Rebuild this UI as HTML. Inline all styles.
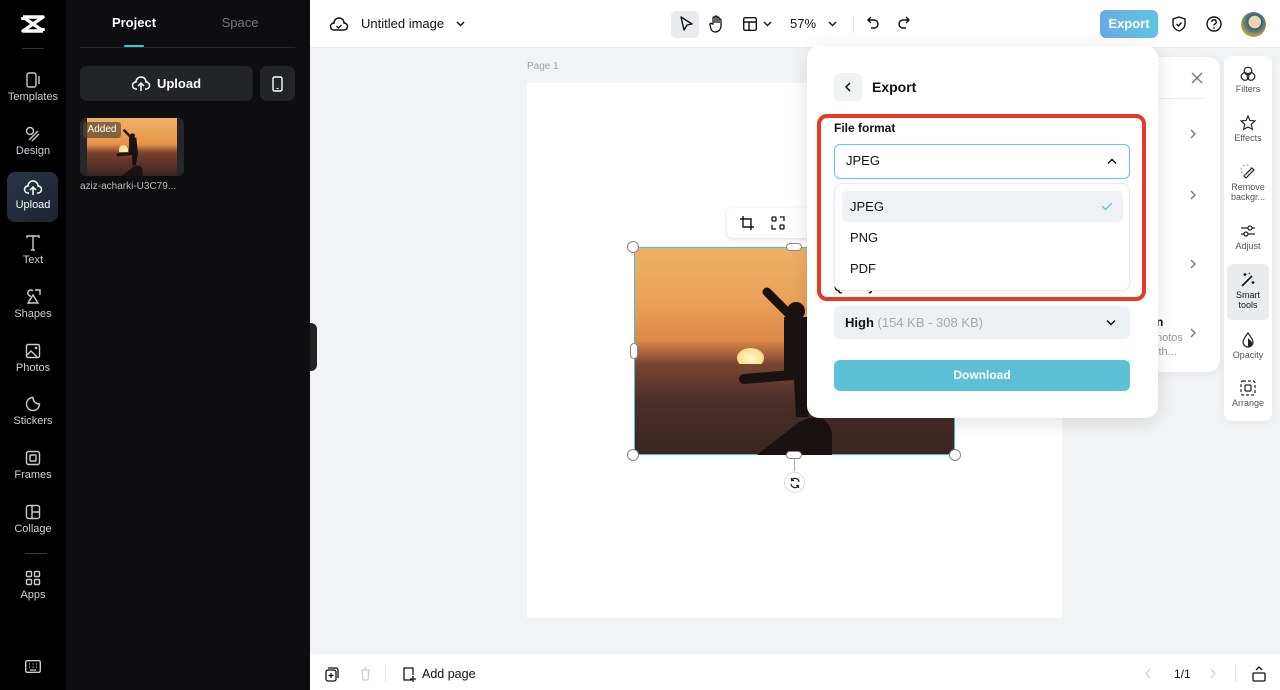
<!DOCTYPE html>
<html><head><meta charset="utf-8"><style>
*{box-sizing:border-box;margin:0;padding:0}
body{width:1280px;height:690px;overflow:hidden;position:relative;font-family:"Liberation Sans",sans-serif;background:#f2f3f5;color:#111}
.abs{position:absolute}
.rail{left:0;top:0;width:66px;height:690px;background:#000}
.ri{position:absolute;left:0;width:66px;text-align:center;color:#cfd0d3;font-size:11px}
.ri svg{display:block;margin:0 auto 3px}
.panel{left:66px;top:0;width:244px;height:690px;background:#0e0e10}
.top{left:310px;top:0;width:970px;height:48px;background:#fff;border-bottom:1px solid #eceef1}
.bot{left:310px;top:654px;width:970px;height:36px;background:#fff}
svg{overflow:visible}
</style></head><body>
<div class="abs rail">
 <svg class="abs" style="left:20px;top:14px" width="26" height="20" viewBox="0 0 26 20"><path d="M3 3h20L3 17h20M3 3l20 14M3 3v3M23 17v-3" stroke="#fff" stroke-width="3.5" fill="none" stroke-linejoin="round"/></svg>
 <div class="abs" style="left:22px;top:48px;width:22px;height:1px;background:#333"></div>
 <div class="ri" style="top:72px"><svg width="16" height="16" viewBox="0 0 16 16"><rect x="2" y="1" width="9" height="14" rx="2" fill="none" stroke="#ccc" stroke-width="1.4"/><path d="M14 4v8" stroke="#ccc" stroke-width="1.4"/></svg>Templates</div>
 <div class="ri" style="top:126px"><svg width="16" height="16" viewBox="0 0 16 16"><circle cx="5" cy="5" r="3.5" fill="none" stroke="#ccc" stroke-width="1.4"/><path d="M4 14l9-9M7 15l7-7" stroke="#ccc" stroke-width="1.4"/></svg>Design</div>
 <div class="abs" style="left:7px;top:172px;width:51px;height:50px;border-radius:8px;background:linear-gradient(135deg,#2a3648,#1c2230)"></div>
 <div class="ri" style="top:180px;color:#fff"><svg width="18" height="16" viewBox="0 0 18 16"><path d="M5 13H4a3.5 3.5 0 0 1 0-7 5 5 0 0 1 10 0 3.5 3.5 0 0 1 0 7h-1M9 15V8M6 10l3-3 3 3" fill="none" stroke="#fff" stroke-width="1.5"/></svg>Upload</div>
 <div class="ri" style="top:235px"><svg width="16" height="16" viewBox="0 0 16 16"><path d="M2 3V1h12v2M8 1v14M6 15h4" fill="none" stroke="#ccc" stroke-width="1.4"/></svg>Text</div>
 <div class="ri" style="top:289px"><svg width="16" height="16" viewBox="0 0 16 16"><path d="M6 7a3 3 0 1 1 2-5M8 6l5 8H3z M10 1h5v5" fill="none" stroke="#ccc" stroke-width="1.4"/></svg>Shapes</div>
 <div class="ri" style="top:343px"><svg width="16" height="16" viewBox="0 0 16 16"><rect x="1.5" y="1.5" width="13" height="13" rx="1.5" fill="none" stroke="#ccc" stroke-width="1.4"/><path d="M2 12l4-4 6 6" fill="none" stroke="#ccc" stroke-width="1.4"/><circle cx="11" cy="5" r="1.3" fill="#ccc"/></svg>Photos</div>
 <div class="ri" style="top:396px"><svg width="16" height="16" viewBox="0 0 16 16"><path d="M14.5 8A6.5 6.5 0 1 1 8 1.5c0 3 2 6.5 6.5 6.5z" fill="none" stroke="#ccc" stroke-width="1.4"/></svg>Stickers</div>
 <div class="ri" style="top:450px"><svg width="16" height="16" viewBox="0 0 16 16"><rect x="1.5" y="1.5" width="13" height="13" rx="2" fill="none" stroke="#ccc" stroke-width="1.4"/><rect x="5" y="5" width="6" height="6" rx="1" fill="none" stroke="#ccc" stroke-width="1.4"/></svg>Frames</div>
 <div class="ri" style="top:504px"><svg width="16" height="16" viewBox="0 0 16 16"><rect x="1.5" y="1.5" width="13" height="13" rx="2" fill="none" stroke="#ccc" stroke-width="1.4"/><path d="M7 2v12M7 8h7" stroke="#ccc" stroke-width="1.4"/></svg>Collage</div>
 <div class="abs" style="left:25px;top:553px;width:22px;height:1px;background:#333"></div>
 <div class="ri" style="top:570px"><svg width="16" height="16" viewBox="0 0 16 16"><g fill="none" stroke="#ccc" stroke-width="1.4"><rect x="1.5" y="1.5" width="5" height="5" rx="1"/><rect x="9.5" y="1.5" width="5" height="5" rx="1"/><rect x="1.5" y="9.5" width="5" height="5" rx="1"/><rect x="9.5" y="9.5" width="5" height="5" rx="1"/></g></svg>Apps</div>
 <svg class="abs" style="left:25px;top:660px" width="16" height="13" viewBox="0 0 16 13"><rect x="0.7" y="0.7" width="14.6" height="11.6" rx="1.5" fill="none" stroke="#ccc" stroke-width="1.4"/><path d="M4 4h1M7.5 4h1M11 4h1M4 7h1M7.5 7h1M11 7h1M5 10h6" stroke="#ccc" stroke-width="1.2"/></svg>
</div>
<div class="abs panel">
 <div class="abs" style="left:14px;top:15px;width:108px;text-align:center;color:#fff;font-weight:bold;font-size:13px">Project</div>
 <div class="abs" style="left:124px;top:15px;width:100px;text-align:center;color:#777;font-size:13px">Space</div>
 <div class="abs" style="left:58px;top:45px;width:20px;height:2px;background:#3ec3da;border-radius:1px"></div>
 <div class="abs" style="left:14px;top:47px;width:215px;height:1px;background:#26272b"></div>
 <div class="abs" style="left:14px;top:66px;width:173px;height:35px;border-radius:7px;background:#232428;color:#fff;font-size:13px;font-weight:bold;display:flex;align-items:center;justify-content:center;gap:7px"><svg width="18" height="16" viewBox="0 0 18 16"><path d="M5 13H4a3.5 3.5 0 0 1 0-7 5 5 0 0 1 10 0 3.5 3.5 0 0 1 0 7h-1M9 15V8M6 10l3-3 3 3" fill="none" stroke="#fff" stroke-width="1.5"/></svg>Upload</div>
 <div class="abs" style="left:194px;top:66px;width:35px;height:35px;border-radius:7px;background:#232428"><svg class="abs" style="left:12px;top:10px" width="11" height="16" viewBox="0 0 11 16"><rect x="1" y="1" width="9" height="14" rx="1.5" fill="none" stroke="#fff" stroke-width="1.4"/><path d="M4.5 12.5h2" stroke="#fff" stroke-width="1.2"/></svg></div>
 <div class="abs" style="left:14px;top:118px;width:104px;height:58px;border-radius:6px;background:#26272b;overflow:hidden">
  <div class="abs" style="left:7px;top:0;width:90px;height:58px;background:linear-gradient(#eeb366 0%,#e7934a 45%,#7a4030 60%,#3a2520 100%)"></div>
  <div class="abs" style="left:39px;top:27px;width:9px;height:7px;border-radius:5px 5px 0 0;background:#fde49a"></div>
  <svg class="abs" style="left:7px;top:0" width="90" height="58" viewBox="0 0 321 208"><path d="M133 45L160 72" stroke="#1a1210" stroke-width="9" stroke-linecap="round"/><circle cx="162" cy="64" r="9" fill="#1a1210"/><path d="M150 70h26l6 60-8 40h-12l-2-38-10-8z" fill="#1a1210"/><path d="M158 128l-48 4" stroke="#1a1210" stroke-width="10" stroke-linecap="round"/><path d="M123 208L165 175Q192 162 198 186L198 208z" fill="#1a1210"/></svg>
  <div class="abs" style="left:3px;top:4px;width:38px;height:16px;border-radius:3px;background:rgba(90,70,50,.7);color:#fff;font-size:10px;line-height:16px;text-align:center">Added</div>
 </div>
 <div class="abs" style="left:14px;top:181px;color:#bbb;font-size:10px">aziz-acharki-U3C79...</div>
</div>
<div class="abs" style="left:310px;top:323px;width:7px;height:48px;background:#222;border-radius:0 6px 6px 0"></div>
<div class="abs top">
 <svg class="abs" style="left:20px;top:16px" width="18" height="16" viewBox="0 0 18 16"><path d="M4 14a3.5 3.5 0 0 1 0-7 5 5 0 0 1 10 0 3.5 3.5 0 0 1 0 7z" fill="none" stroke="#111" stroke-width="1.5"/><path d="M6.5 10l2 2 3-3" fill="none" stroke="#111" stroke-width="1.3"/></svg>
 <div class="abs" style="left:51px;top:16px;font-size:13px;color:#111">Untitled image</div>
 <svg class="abs" style="left:146px;top:21px" width="9" height="6"><path d="M1 1l3.5 3.5L8 1" fill="none" stroke="#111" stroke-width="1.4"/></svg>
 <div class="abs" style="left:361px;top:11px;width:28px;height:27px;border-radius:5px;background:#e8eaed"></div>
 <svg class="abs" style="left:369px;top:16px" width="14" height="16" viewBox="0 0 14 16"><path d="M2 1l11 7-5 1-3 5z" fill="none" stroke="#111" stroke-width="1.4" stroke-linejoin="round"/></svg>
 <svg class="abs" style="left:399px;top:15px" width="16" height="18" viewBox="0 0 16 18"><path d="M4 9V3a1 1 0 0 1 2 0v5V2a1 1 0 0 1 2 0v6V3a1 1 0 0 1 2 0v5V5a1 1 0 0 1 2 0v6a6 6 0 0 1-6 6 5 5 0 0 1-4-3L1 10a1 1 0 0 1 2-1z" fill="none" stroke="#111" stroke-width="1.3"/></svg>
 <svg class="abs" style="left:433px;top:17px" width="14" height="14"><rect x=".7" y=".7" width="12.6" height="12.6" rx="1.5" fill="none" stroke="#111" stroke-width="1.4"/><path d="M1 5h12M6 5v8" stroke="#111" stroke-width="1.4"/></svg>
 <svg class="abs" style="left:453px;top:21px" width="9" height="6"><path d="M1 1l3.5 3.5L8 1" fill="none" stroke="#111" stroke-width="1.4"/></svg>
 <div class="abs" style="left:480px;top:16px;font-size:13px">57%</div>
 <svg class="abs" style="left:518px;top:21px" width="9" height="6"><path d="M1 1l3.5 3.5L8 1" fill="none" stroke="#111" stroke-width="1.4"/></svg>
 <div class="abs" style="left:543px;top:16px;width:1px;height:17px;background:#e3e5e8"></div>
 <svg class="abs" style="left:556px;top:16px" width="14" height="16" viewBox="0 0 14 16"><path d="M5 1L2 4l3 3M2 4h6a4 4 0 0 1 0 8H5" fill="none" stroke="#111" stroke-width="1.4"/></svg>
 <svg class="abs" style="left:587px;top:16px" width="14" height="16" viewBox="0 0 14 16"><path d="M9 1l3 3-3 3M12 4H6a4 4 0 0 0 0 8h3" fill="none" stroke="#111" stroke-width="1.4"/></svg>
 <div class="abs" style="left:790px;top:10px;width:58px;height:28px;border-radius:6px;background:linear-gradient(90deg,#6aa8e8,#5cc8dc);color:#fff;font-weight:bold;font-size:13px;text-align:center;line-height:28px">Export</div>
 <svg class="abs" style="left:862px;top:16px" width="14" height="16" viewBox="0 0 14 16"><path d="M7 1l6 2v5c0 3.5-3 6-6 7-3-1-6-3.5-6-7V3z" fill="none" stroke="#111" stroke-width="1.4"/><path d="M4.5 8l2 2 3-3.5" fill="none" stroke="#111" stroke-width="1.4"/></svg>
 <svg class="abs" style="left:896px;top:16px" width="16" height="16"><circle cx="8" cy="8" r="7" fill="none" stroke="#111" stroke-width="1.4"/><path d="M5.8 6a2.2 2.2 0 1 1 3 2c-.7.3-.8.8-.8 1.5" fill="none" stroke="#111" stroke-width="1.4"/><circle cx="8" cy="12" r=".9" fill="#111"/></svg>
 <div class="abs" style="left:931px;top:12px;width:25px;height:25px;border-radius:50%;background:radial-gradient(circle at 55% 40%,#f1d2b4 0 30%,#2f5e86 32%,#d7b53a 80%)"></div>
</div>
<div class="abs" style="left:527px;top:61px;font-size:10px;color:#9ba0a8">Page 1</div>
<div class="abs" style="left:527px;top:83px;width:535px;height:535px;background:#fff"></div>
<!-- image -->
<div class="abs" style="left:634px;top:247px;width:321px;height:208px;background:linear-gradient(#eeb167 0%,#eca25a 25%,#dc8746 45%,#7b4634 56%,#4a2e29 75%,#3b2623 100%);border:1.5px solid #3ec3da"></div>
<div class="abs" style="left:737px;top:348px;width:27px;height:20px;border-radius:50%;background:radial-gradient(#fff8c8,#fbd26a);clip-path:inset(0 0 20% 0)"></div>
<svg class="abs" style="left:634px;top:247px" width="321" height="208" viewBox="0 0 321 208"><path d="M133 45L160 72" stroke="#1a1210" stroke-width="9" stroke-linecap="round"/><circle cx="162" cy="64" r="9" fill="#1a1210"/><path d="M150 70h26l6 60-8 40h-12l-2-38-10-8z" fill="#1a1210"/><path d="M158 128l-48 4" stroke="#1a1210" stroke-width="10" stroke-linecap="round"/><path d="M123 208L165 175Q192 162 198 186L198 208z" fill="#1a1210"/></svg>
<div class="abs" style="left:627px;top:241px;width:12px;height:12px;border-radius:50%;background:#fff;border:1px solid #888"></div>
<div class="abs" style="left:627px;top:449px;width:12px;height:12px;border-radius:50%;background:#fff;border:1px solid #888"></div>
<div class="abs" style="left:949px;top:449px;width:12px;height:12px;border-radius:50%;background:#fff;border:1px solid #888"></div>
<div class="abs" style="left:786px;top:243px;width:16px;height:8px;border-radius:4px;background:#fff;border:1px solid #888"></div>
<div class="abs" style="left:786px;top:451px;width:16px;height:8px;border-radius:4px;background:#fff;border:1px solid #888"></div>
<div class="abs" style="left:630px;top:343px;width:8px;height:16px;border-radius:4px;background:#fff;border:1px solid #888"></div>
<div class="abs" style="left:794px;top:459px;width:1px;height:12px;background:#aaa"></div>
<div class="abs" style="left:784px;top:472px;width:21px;height:21px;border-radius:50%;background:#fff;border:1px solid #ddd"><svg class="abs" style="left:4px;top:4px" width="12" height="12" viewBox="0 0 12 12"><path d="M10 5A4 4 0 0 0 2.5 3.5M2 7a4 4 0 0 0 7.5 1.5M2.5 1v2.5H5M9.5 11V8.5H7" fill="none" stroke="#222" stroke-width="1.2"/></svg></div>
<div class="abs" style="left:727px;top:208px;width:100px;height:30px;background:#fff;border-radius:6px;box-shadow:0 1px 4px rgba(0,0,0,.15)">
 <svg class="abs" style="left:13px;top:8px" width="14" height="14"><path d="M3 0v11h11M0 3h11v11" fill="none" stroke="#111" stroke-width="1.4"/></svg>
 <svg class="abs" style="left:44px;top:8px" width="14" height="14"><g fill="none" stroke="#111" stroke-width="1.3"><rect x="1" y="1" width="4" height="4" rx="1"/><rect x="9" y="9" width="4" height="4" rx="1"/><path d="M1 9v4h4M9 1h4v4"/></g></svg>
</div>
<!-- behind panel -->
<div class="abs" style="left:1060px;top:57px;width:160px;height:315px;background:#fff;border-radius:12px;box-shadow:0 2px 10px rgba(0,0,0,.06)">
 <svg class="abs" style="left:131px;top:15px" width="12" height="12"><path d="M1 1l10 10M11 1L1 11" stroke="#777" stroke-width="1.4"/></svg>
 <div class="abs" style="left:30px;top:41px;width:115px;height:1px;background:#eee"></div>
 <svg class="abs" style="left:130px;top:72px" width="6" height="10"><path d="M1 1l4 4-4 4" fill="none" stroke="#777" stroke-width="1.4"/></svg>
 <svg class="abs" style="left:130px;top:133px" width="6" height="10"><path d="M1 1l4 4-4 4" fill="none" stroke="#777" stroke-width="1.4"/></svg>
 <svg class="abs" style="left:130px;top:202px" width="6" height="10"><path d="M1 1l4 4-4 4" fill="none" stroke="#777" stroke-width="1.4"/></svg>
 <svg class="abs" style="left:130px;top:271px" width="6" height="10"><path d="M1 1l4 4-4 4" fill="none" stroke="#777" stroke-width="1.4"/></svg>
 <div class="abs" style="left:96px;top:258px;font-size:12px;font-weight:bold">n</div>
 <div class="abs" style="left:96px;top:274px;font-size:11px;color:#999;line-height:14px">notos<br>ith...</div>
</div>
<!-- right rail -->
<div class="abs" style="left:1224px;top:56px;width:48px;height:365px;background:#fff;border-radius:8px;box-shadow:0 2px 8px rgba(0,0,0,.06);font-size:9px;color:#555;text-align:center;line-height:10px">
 <div class="abs" style="left:3px;top:208px;width:42px;height:56px;border-radius:6px;background:#e9ebee"></div>
 <div class="abs" style="left:0;width:48px;top:10px"><svg width="16" height="16"><g fill="none" stroke="#222" stroke-width="1.2"><circle cx="8" cy="5" r="3.8"/><circle cx="5" cy="10.5" r="3.8"/><circle cx="11" cy="10.5" r="3.8"/></g></svg><br>Filters</div>
 <div class="abs" style="left:0;width:48px;top:59px"><svg width="16" height="16"><path d="M8 1l2 4.5 5 .5-3.7 3.3 1 5L8 12l-4.3 2.3 1-5L1 6l5-.5z" fill="none" stroke="#222" stroke-width="1.2"/></svg><br>Effects</div>
 <div class="abs" style="left:0;width:48px;top:108px"><svg width="16" height="16"><path d="M6 14l8-8-2-2-8 8z" fill="none" stroke="#222" stroke-width="1.2"/><circle cx="6" cy="6" r="5" fill="none" stroke="#999" stroke-width="1" stroke-dasharray="2 2"/></svg><br>Remove<br>backgr...</div>
 <div class="abs" style="left:0;width:48px;top:167px"><svg width="16" height="16"><path d="M1 5h14M1 11h14" stroke="#222" stroke-width="1.2"/><circle cx="10" cy="5" r="2" fill="#fff" stroke="#222" stroke-width="1.2"/><circle cx="6" cy="11" r="2" fill="#fff" stroke="#222" stroke-width="1.2"/></svg><br>Adjust</div>
 <div class="abs" style="left:0;width:48px;top:216px;color:#111"><svg width="16" height="16"><path d="M2 14L12 4" stroke="#111" stroke-width="1.6"/><path d="M5 1v3M3.5 2.5h3M13 9v3M11.5 10.5h3M9 1l.5 1" stroke="#111" stroke-width="1.2"/></svg><br>Smart<br>tools</div>
 <div class="abs" style="left:0;width:48px;top:276px"><svg width="16" height="16"><path d="M8 1C5 5 3 8 3 10a5 5 0 0 0 10 0c0-2-2-5-5-9z" fill="none" stroke="#222" stroke-width="1.2"/><path d="M8 6v9a4 4 0 0 0 4-5z" fill="#222"/></svg><br>Opacity</div>
 <div class="abs" style="left:0;width:48px;top:324px"><svg width="16" height="16"><rect x="1" y="1" width="14" height="14" rx="2" fill="none" stroke="#222" stroke-width="1.2" stroke-dasharray="3 2"/><rect x="5" y="5" width="6" height="6" rx="1" fill="none" stroke="#222" stroke-width="1.2"/></svg><br>Arrange</div>
</div>
<!-- export panel -->
<div class="abs" style="left:807px;top:46px;width:351px;height:372px;background:#fff;border-radius:12px;box-shadow:0 4px 20px rgba(0,0,0,.12)">
 <div class="abs" style="left:27px;top:27px;width:28px;height:28px;border-radius:6px;background:#f1f2f4"><svg class="abs" style="left:11px;top:9px" width="6" height="10"><path d="M5 1L1 5l4 4" fill="none" stroke="#111" stroke-width="1.5"/></svg></div>
 <div class="abs" style="left:65px;top:33px;font-size:14px;font-weight:bold">Export</div>
 <div class="abs" style="left:27px;top:75px;font-size:12px;font-weight:bold">File format</div>
 <div class="abs" style="left:27px;top:98px;width:296px;height:35px;border:1.5px solid #5ccbe0;border-radius:6px;font-size:13px;line-height:32px;padding-left:11px">JPEG<svg class="abs" style="left:272px;top:13px" width="10" height="6"><path d="M1 5.5L5 1.5l4 4" fill="none" stroke="#111" stroke-width="1.5"/></svg></div>
 <div class="abs" style="left:27px;top:234px;font-size:12px;font-weight:bold">Quality</div>
 <div class="abs" style="left:27px;top:260px;width:296px;height:33px;background:#eef1f4;border-radius:6px;font-size:13px;line-height:33px;padding-left:11px"><b>High</b> <span style="color:#a3a8b0">(154 KB - 308 KB)</span><svg class="abs" style="left:272px;top:14px" width="10" height="6"><path d="M1 .5l4 4 4-4" fill="none" stroke="#111" stroke-width="1.5"/></svg></div>
 <div class="abs" style="left:27px;top:314px;width:296px;height:31px;background:#5cc1d6;border-radius:6px;color:#fff;font-size:12px;font-weight:bold;text-align:center;line-height:31px">Download</div>
 <div class="abs" style="left:27px;top:137px;width:296px;height:108px;background:#fff;border:1px solid #e8eaed;border-radius:8px;box-shadow:0 2px 6px rgba(0,0,0,.06);font-size:13px">
  <div class="abs" style="left:7px;top:7px;width:281px;height:31px;background:#eff1f4;border-radius:5px"></div>
  <div class="abs" style="left:15px;top:15px">JPEG</div>
  <svg class="abs" style="left:266px;top:18px" width="12" height="9"><path d="M1 4l3.5 3.5L11 1" fill="none" stroke="#5cc8dc" stroke-width="1.4"/></svg>
  <div class="abs" style="left:15px;top:46px">PNG</div>
  <div class="abs" style="left:15px;top:77px">PDF</div>
 </div>
</div>
<div class="abs" style="left:817px;top:114px;width:329px;height:187px;border:4px solid #e83a22;border-radius:10px"></div>
<div class="abs bot">
 <svg class="abs" style="left:15px;top:13px" width="13" height="15"><rect x="1" y="3" width="10" height="11" rx="2" fill="none" stroke="#111" stroke-width="1.3"/><path d="M3 1h8a2 2 0 0 1 2 2v8M6 6v5M3.5 8.5h5" fill="none" stroke="#111" stroke-width="1.3"/></svg>
 <svg class="abs" style="left:50px;top:13px" width="11" height="14"><path d="M1 3h9M4 1h3M2 3l1 10h5l1-10" fill="none" stroke="#ccc" stroke-width="1.2"/></svg>
 <div class="abs" style="left:75px;top:12px;width:1px;height:16px;background:#e3e5e8"></div>
 <svg class="abs" style="left:92px;top:12px" width="15" height="16"><path d="M10 14H2V2h9v7M8 13h6M11 10v6" fill="none" stroke="#111" stroke-width="1.3"/></svg>
 <div class="abs" style="left:112px;top:13px;font-size:12.5px">Add page</div>
 <svg class="abs" style="left:835px;top:14px" width="6" height="11"><path d="M5 1L1 5.5 5 10" fill="none" stroke="#ccc" stroke-width="1.2"/></svg>
 <div class="abs" style="left:864px;top:13px;font-size:12px">1/1</div>
 <svg class="abs" style="left:900px;top:14px" width="6" height="11"><path d="M1 1l4 4.5L1 10" fill="none" stroke="#ccc" stroke-width="1.2"/></svg>
 <div class="abs" style="left:925px;top:12px;width:1px;height:16px;background:#e3e5e8"></div>
 <svg class="abs" style="left:942px;top:12px" width="14" height="16"><path d="M4 4l3-3 3 3" fill="none" stroke="#111" stroke-width="1.3"/><rect x="1" y="7" width="12" height="8" rx="1" fill="none" stroke="#111" stroke-width="1.3"/></svg>
</div>
</body></html>
